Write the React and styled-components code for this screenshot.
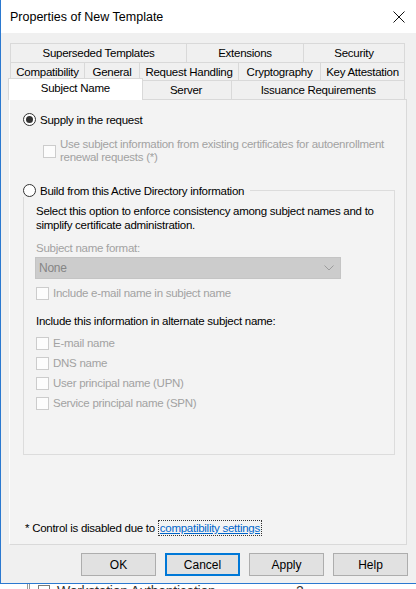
import React from 'react';
import styled, { createGlobalStyle } from 'styled-components';

const GlobalStyle = createGlobalStyle`
  html, body {
    margin: 0;
    padding: 0;
    background: #fff;
    overflow: hidden;
  }
  body {
    font-family: "Liberation Sans", Arial, sans-serif;
    font-size: 11.5px;
    letter-spacing: -0.27px;
    color: #000;
  }
`;

const tabRows = [
  [
    { label: 'Superseded Templates', w: 177 },
    { label: 'Extensions', w: 118 },
    { label: 'Security', w: 102 },
  ],
  [
    { label: 'Compatibility', w: 75 },
    { label: 'General', w: 56 },
    { label: 'Request Handling', w: 100 },
    { label: 'Cryptography', w: 83 },
    { label: 'Key Attestation', w: 85 },
  ],
  [
    { label: 'Subject Name', w: 132, active: true },
    { label: 'Server', w: 93 },
    { label: 'Issuance Requirements', w: 174 },
  ],
];

const altNames = [
  'E-mail name',
  'DNS name',
  'User principal name (UPN)',
  'Service principal name (SPN)',
];

const CloseIcon = () => (
  <svg width="12" height="12" viewBox="0 0 12 12">
    <path d="M0.5 0.5 L11.5 11.5 M11.5 0.5 L0.5 11.5" stroke="#111" strokeWidth="1" fill="none" />
  </svg>
);

const Chevron = () => (
  <svg width="10" height="6" viewBox="0 0 10 6">
    <path d="M0.5 0.5 L5 5 L9.5 0.5" stroke="#9c9c9c" strokeWidth="1" fill="none" />
  </svg>
);

const App = () => {
  return (
    <>
      <GlobalStyle />
      <Window>
        <TitleBar>
          <span>Properties of New Template</span>
          <CloseButton>
            <CloseIcon />
          </CloseButton>
        </TitleBar>

        <Body>
          <Tabs>
            {tabRows.map((row, i) => (
              <TabRow key={i} $h={i === 1 ? 18 : 19}>
                {row.map((t) => (
                  <Tab key={t.label} $w={t.w} $active={t.active}>
                    {t.label}
                  </Tab>
                ))}
              </TabRow>
            ))}
          </Tabs>

          <Panel>
            <Option>
              <Radio $checked />
              <span>Supply in the request</span>
            </Option>
            <SubOption>
              <CheckBox />
              <Muted>
                Use subject information from existing certificates for autoenrollment
                <br />
                renewal requests (*)
              </Muted>
            </SubOption>

            <Group>
              <Legend>
                <Option>
                  <Radio />
                  <span>Build from this Active Directory information</span>
                </Option>
              </Legend>
              <Para>
                Select this option to enforce consistency among subject names and to
                <br />
                simplify certificate administration.
              </Para>
              <FieldLabel>Subject name format:</FieldLabel>
              <Select>
                <span>None</span>
                <Chevron />
              </Select>
              <CheckRow $top={7}>
                <CheckBox />
                <Muted>Include e-mail name in subject name</Muted>
              </CheckRow>
              <SectionLabel>Include this information in alternate subject name:</SectionLabel>
              <CheckList>
                {altNames.map((n) => (
                  <CheckRow key={n} $h={20}>
                    <CheckBox />
                    <Muted>{n}</Muted>
                  </CheckRow>
                ))}
              </CheckList>
            </Group>

            <Footnote>
              * Control is disabled due to <Link>compatibility settings</Link>
            </Footnote>
          </Panel>

          <Buttons>
            <Button>OK</Button>
            <Button $primary>Cancel</Button>
            <Button>Apply</Button>
            <Button>Help</Button>
          </Buttons>
        </Body>
      </Window>

      <BehindRow>
        <TreeLine />
        <ItemIcon />
        <BehindText>Workstation Authentication</BehindText>
        <BehindCount>2</BehindCount>
      </BehindRow>
    </>
  );
};

export default App;

const Window = styled.div`
  width: 416px;
  height: 584px;
  box-sizing: border-box;
  background: #f0f0f0;
  border-left: 1px solid #2b79d0;
  border-bottom: 1px solid #2b79d0;
  display: flex;
  flex-direction: column;
`;

const TitleBar = styled.div`
  height: 33px;
  flex: none;
  background: #fff;
  display: flex;
  align-items: center;
  justify-content: space-between;
  padding: 0 11px 0 9px;
  font-size: 12.5px;
  letter-spacing: 0;
`;

const CloseButton = styled.div`
  display: flex;
  align-items: center;
`;

const Body = styled.div`
  flex: 1;
  display: flex;
  flex-direction: column;
  padding: 10px 9px 7px 8px;
`;

const Tabs = styled.div`
  display: flex;
  flex-direction: column;
  padding: 0 2px 0 1px;
`;

const TabRow = styled.div`
  display: flex;
  height: ${(p) => p.$h}px;
`;

const Tab = styled.div`
  box-sizing: border-box;
  width: ${(p) => (p.$active ? p.$w + 3 : p.$w)}px;
  margin-left: ${(p) => (p.$active ? -2 : -1)}px;
  margin-right: ${(p) => (p.$active ? -2 : 0)}px;
  margin-top: ${(p) => (p.$active ? -2 : 0)}px;
  height: ${(p) => (p.$active ? 'calc(100% + 3px)' : '100%')};
  border: 1px solid #d9d9d9;
  border-bottom: none;
  background: ${(p) => (p.$active ? '#fff' : '#f0f0f0')};
  position: relative;
  z-index: ${(p) => (p.$active ? 2 : 1)};
  display: flex;
  align-items: ${(p) => (p.$active ? 'flex-start' : 'center')};
  padding-top: ${(p) => (p.$active ? 3 : 0)}px;
  justify-content: center;
  white-space: nowrap;
  &:first-child {
    margin-left: ${(p) => (p.$active ? -2 : 0)}px;
  }
`;

const Panel = styled.div`
  flex: 1;
  display: flex;
  flex-direction: column;
  background: #f3f3f3;
  border: 1px solid #d9d9d9;
  border-left-color: #fff;
  padding: 13px 11px 9px 13px;
`;

const Option = styled.label`
  display: flex;
  align-items: center;
  gap: 4px;
  height: 13px;
  white-space: nowrap;
`;

const Radio = styled.span`
  box-sizing: border-box;
  width: 13px;
  height: 13px;
  flex: none;
  border-radius: 50%;
  border: 1px solid #333;
  background: #fff;
  display: flex;
  align-items: center;
  justify-content: center;
  &::after {
    content: '';
    display: ${(p) => (p.$checked ? 'block' : 'none')};
    width: 7px;
    height: 7px;
    border-radius: 50%;
    background: #333;
  }
`;

const CheckBox = styled.span`
  box-sizing: border-box;
  width: 13px;
  height: 13px;
  flex: none;
  border: 1px solid #cccccc;
  background: #fcfcfc;
`;

const Muted = styled.span`
  color: #a2a2a2;
  line-height: 13px;
  white-space: nowrap;
`;

const SubOption = styled.div`
  display: flex;
  align-items: center;
  gap: 4px;
  margin: 12px 0 0 20px;
`;

const Group = styled.fieldset`
  margin: 20px 0 0;
  padding: 7px 11px 41px 12px;
  border: 1px solid #dcdcdc;
  display: flex;
  flex-direction: column;
`;

const Legend = styled.legend`
  padding: 0 6px 0 0;
  margin-left: -13px;
`;

const Para = styled.div`
  line-height: 14px;
  white-space: nowrap;
`;

const FieldLabel = styled.div`
  color: #a2a2a2;
  line-height: 14px;
  margin-top: 9px;
`;

const Select = styled.div`
  box-sizing: border-box;
  width: 306px;
  height: 22px;
  margin-top: 2px;
  margin-left: -1px;
  background: #cccccc;
  border: 1px solid #c4c4c4;
  color: #858585;
  font-size: 12px;
  display: flex;
  align-items: center;
  justify-content: space-between;
  padding: 0 6px 0 3px;
`;

const CheckRow = styled.div`
  display: flex;
  align-items: center;
  gap: 4px;
  height: ${(p) => p.$h || 14}px;
  margin-top: ${(p) => p.$top || 0}px;
`;

const SectionLabel = styled.div`
  line-height: 14px;
  margin-top: 14px;
`;

const CheckList = styled.div`
  display: flex;
  flex-direction: column;
  margin-top: 5px;
`;

const Footnote = styled.div`
  margin: auto 0 0 2px;
  line-height: 14px;
  white-space: nowrap;
`;

const Link = styled.span`
  color: #0066cc;
  text-decoration: underline;
  outline: 1px dotted #333;
  outline-offset: 1px;
  margin-left: 2px;
`;

const Buttons = styled.div`
  display: flex;
  justify-content: flex-end;
  gap: 9px;
  margin-top: 8px;
  margin-right: -1px;
`;

const Button = styled.div`
  box-sizing: border-box;
  width: 75px;
  height: 23px;
  display: flex;
  align-items: center;
  justify-content: center;
  background: #e1e1e1;
  border: ${(p) => (p.$primary ? '2px solid #0078d7' : '1px solid #adadad')};
  font-size: 12px;
  letter-spacing: 0;
`;

const BehindRow = styled.div`
  height: 5px;
  overflow: hidden;
  display: flex;
  align-items: flex-start;
  padding-left: 27px;
`;

const TreeLine = styled.div`
  width: 3px;
  height: 10px;
  border-left: 1px solid #999;
  border-right: 1px solid #999;
  box-sizing: border-box;
`;

const ItemIcon = styled.div`
  width: 12px;
  height: 10px;
  margin: 1px 0 0 8px;
  border: 1px solid #7a7a7a;
  box-sizing: border-box;
`;

const BehindText = styled.div`
  margin: 0 0 0 7px;
  width: 239px;
  font-size: 14px;
  line-height: 14px;
  color: #333;
`;

const BehindCount = styled.div`
  font-size: 14px;
  line-height: 14px;
  color: #333;
`;
